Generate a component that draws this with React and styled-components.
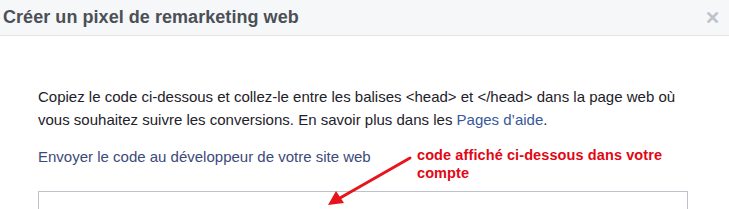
import React from 'react';
import styled, { createGlobalStyle } from 'styled-components';

const Global = createGlobalStyle`
    body {
        margin: 0;
        background: #fff;
        font-family: "Liberation Sans", Arial, sans-serif;
    }
`

const Dialog = styled.div`
    width: 729px;
    height: 209px;
    overflow: hidden;
    background: #fff;
`

const Header = styled.div`
    height: 36px;
    box-sizing: border-box;
    display: flex;
    align-items: center;
    justify-content: space-between;
    padding: 0 9px 0 3px;
    background: #f6f7f9;
    border-bottom: 1px solid #e5e5e5;
`

const Title = styled.h1`
    margin: 0;
    font-size: 18px;
    font-weight: bold;
    color: #4b4f56;
    letter-spacing: 0.05px;
`

const Close = styled.span`
    font-size: 18px;
    font-weight: bold;
    color: #bec2c9;
    line-height: 1;
`

const Body = styled.div`
    padding: 49px 38px 0 38px;
`

const Text = styled.p`
    margin: 0;
    width: 652px;
    font-size: 15px;
    line-height: 23px;
    color: #1d2129;
`

const Link = styled.a`
    color: ${props => props.dark ? '#3b4a7a' : '#365899'};
    text-decoration: none;
`

const SendRow = styled.div`
    margin-top: 17px;
    font-size: 15px;
    line-height: 18px;
`

const CodeBox = styled.div`
    margin-top: 25px;
    width: 650px;
    height: 40px;
    box-sizing: border-box;
    border: 1px solid #bdc1c9;
`

const Note = styled.div`
    position: absolute;
    left: 417px;
    top: 146px;
    font-size: 14.5px;
    line-height: 18px;
    font-weight: bold;
    color: #e30613;
    letter-spacing: 0.1px;
`

const Arrow = styled.svg`
    position: absolute;
    left: 320px;
    top: 150px;
`

export default function App() {
    return (
        <Dialog>
            <Global />
            <Header>
                <Title>Créer un pixel de remarketing web</Title>
                <Close>✕</Close>
            </Header>
            <Body>
                <Text>
                    Copiez le code ci-dessous et collez-le entre les balises &lt;head&gt; et &lt;/head&gt; dans la page web où vous souhaitez suivre les conversions. En savoir plus dans les <Link href="#">Pages d’aide</Link>.
                </Text>
                <SendRow>
                    <Link dark href="#">Envoyer le code au développeur de votre site web</Link>
                </SendRow>
                <CodeBox />
            </Body>
            <Note>
                code affiché ci-dessous dans votre<br />compte
            </Note>
            <Arrow width="100" height="60" viewBox="0 0 100 60">
                <line x1="90" y1="8" x2="20" y2="48" stroke="#e8141c" strokeWidth="3" strokeLinecap="round" />
                <polygon points="8,55 16,41 24,53" fill="#e8141c" />
            </Arrow>
        </Dialog>
    );
}
